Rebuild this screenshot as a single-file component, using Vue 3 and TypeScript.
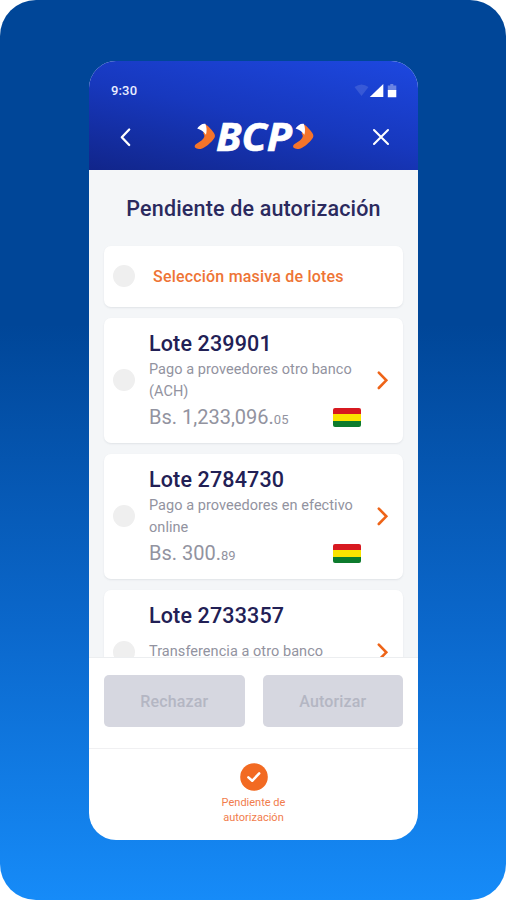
<script setup lang="ts">
interface Lote {
  id: string
  lines: string[]
  amount?: string
  cents?: string
}

const lotes: Lote[] = [
  { id: '239901', lines: ['Pago a proveedores otro banco', '(ACH)'], amount: '1,233,096', cents: '05' },
  { id: '2784730', lines: ['Pago a proveedores en efectivo', 'online'], amount: '300', cents: '89' },
  { id: '2733357', lines: ['Transferencia a otro banco'] },
]
</script>

<template>
  <main class="backdrop">
    <section class="phone">
      <header class="header">
        <div class="status">
          <span class="time">9:30</span>
          <svg class="signals" width="44" height="16" viewBox="0 0 44 16">
            <path d="M0.5 5 Q7.5 0 14.5 5 L7.5 14Z" fill="#fff" fill-opacity=".13" />
            <path d="M29.3 2 V15 H15.8Z" fill="#fff" />
            <path d="M36.3 2 h3 v1.5 h3 v5 h-8.5 v-5 h2.5Z" fill="#fff" fill-opacity=".35" />
            <path d="M33.8 8 h8.5 v7.2 h-8.5Z" fill="#fff" />
          </svg>
        </div>
        <nav class="nav">
          <svg class="nav-icon" width="20" height="24" viewBox="0 0 20 24">
            <path d="M14.2 4.5 L6.8 12.2 L14.2 20" fill="none" stroke="#fff" stroke-width="2.3" stroke-linecap="round" stroke-linejoin="round" />
          </svg>
          <svg class="logo" width="122" height="36" viewBox="0 0 122 36">
            <g id="mark">
              <path d="M11.3 5 C14.5 7.2 18.8 11.8 20.6 15.2 C21.3 16.8 21 18.2 19.8 19.8 C17 23.6 12.2 28 8.2 29.4 C5.4 30.4 2.4 30.1 1 28.6 C.2 27.2 1 25.8 2.6 24.8 C6.4 22.4 9.4 20.6 10.2 18 C10.7 16.6 10 15.6 9.3 14.5Z" fill="#f5742a" />
              <path d="M3.2 9.6 C5 6.4 8.2 4.2 11.3 4.7 C12.8 7.8 13 12 12 15.8 C9.5 12.6 6.8 10.6 3.2 9.6Z" fill="#fff" />
            </g>
            <use href="#mark" x="98.4" />
            <text class="wordmark" x="22" y="31.5" textLength="76" lengthAdjust="spacingAndGlyphs">BCP</text>
          </svg>
          <svg class="nav-icon" width="24" height="24" viewBox="0 0 24 24">
            <path d="M5 5 L19 19 M19 5 L5 19" fill="none" stroke="#fff" stroke-width="2.1" stroke-linecap="round" />
          </svg>
        </nav>
      </header>

      <div class="content">
        <h1 class="title">Pendiente de autorización</h1>
        <div class="card bulk">
          <span class="check" />
          <span class="bulk-label">Selección masiva de lotes</span>
        </div>
        <article v-for="lote in lotes" :key="lote.id" class="card lote" :class="{ short: !lote.amount }">
          <span class="check" />
          <div class="body">
            <h2 class="name">Lote {{ lote.id }}</h2>
            <p class="desc"><span v-for="line in lote.lines" :key="line" class="line">{{ line }}</span></p>
            <div v-if="lote.amount" class="money">
              <span class="amount">Bs. {{ lote.amount }}.<small class="cents">{{ lote.cents }}</small></span>
              <span class="flag" />
            </div>
          </div>
          <svg class="arrow" width="14" height="22" viewBox="0 0 14 22">
            <path d="M2.8 2.6 L10.3 10.3 L2.8 18" fill="none" stroke="#ee6418" stroke-width="2.6" stroke-linecap="round" stroke-linejoin="miter" />
          </svg>
        </article>
      </div>

      <div class="actions">
        <button class="action reject">Rechazar</button>
        <button class="action approve">Autorizar</button>
      </div>

      <footer class="tab">
        <svg width="28" height="28" viewBox="0 0 28 28">
          <circle cx="14" cy="14" r="13.8" fill="#f26a22" />
          <path d="M8.4 14.4 L12.2 17.8 L19.2 10.4" fill="none" stroke="#fff" stroke-width="2.5" stroke-linecap="round" stroke-linejoin="round" />
        </svg>
        <span class="tab-label">Pendiente de<br />autorización</span>
      </footer>
    </section>
  </main>
</template>

<style>
body {
  margin: 0;
  background: #fff;
}
</style>

<style scoped>
.backdrop {
  box-sizing: border-box;
  width: 506px;
  height: 900px;
  padding: 61px 88px 60px 89px;
  border-radius: 36px;
  background: linear-gradient(180deg, #004698 0%, #004698 36%, #0b68cc 70%, #168bf8 100%);
  font-family: Roboto, "Liberation Sans", sans-serif;
}
.phone {
  display: flex;
  flex-direction: column;
  height: 779px;
  border-radius: 27px;
  overflow: hidden;
  background: #fff;
}
.header {
  flex: none;
  height: 109px;
  background: linear-gradient(192deg, #1d48e0 0%, #1738be 50%, #11258a 100%);
}
.status {
  display: flex;
  align-items: center;
  justify-content: space-between;
  height: 18px;
  padding: 20px 20px 1px 22px;
}
.time {
  color: #e9edff;
  font-size: 13px;
  font-weight: 500;
  letter-spacing: 0.15px;
}
.nav {
  display: flex;
  align-items: center;
  justify-content: space-between;
  height: 36px;
  padding: 19px 25px 0 26px;
}
.logo {
  margin-left: 6px;
  overflow: visible;
}
.wordmark {
  fill: #fff;
  stroke: #fff;
  stroke-width: 0.7px;
  font: italic 700 39px "Open Sans", "Noto Sans", sans-serif;
}
.content {
  flex: none;
  height: 487px;
  box-sizing: border-box;
  overflow: hidden;
  padding: 25px 15px 0;
  background: #f4f6f8;
}
.title {
  margin: 0 0 24px;
  color: #2b2a5e;
  font-size: 21.5px;
  font-weight: 500;
  line-height: 27px;
  letter-spacing: 0.17px;
  text-align: center;
  white-space: nowrap;
}
.card {
  display: flex;
  box-sizing: border-box;
  align-items: center;
  margin-bottom: 11px;
  border-radius: 7px;
  background: #fff;
  box-shadow: 0 1px 2px rgba(60, 70, 90, 0.1);
}
.check {
  flex: none;
  width: 22px;
  height: 22px;
  margin: 0 0 1px 9px;
  border-radius: 50%;
  background: #efefef;
}
.bulk {
  height: 61px;
}
.bulk-label {
  margin: 0 0 1px 18px;
  color: #ee7435;
  font-size: 16px;
  font-weight: 500;
  letter-spacing: 0.2px;
}
.lote {
  height: 125px;
}
.body {
  align-self: flex-start;
  width: 212px;
  margin-left: 14px;
  padding-top: 12px;
}
.name {
  margin: 0;
  color: #222055;
  font-size: 21.5px;
  font-weight: 500;
  line-height: 27px;
  letter-spacing: 0.15px;
  white-space: nowrap;
}
.desc {
  margin: 0;
  padding-top: 2px;
  color: #9293a0;
  font-size: 14.5px;
  line-height: 21.5px;
  letter-spacing: 0.05px;
  white-space: nowrap;
}
.line {
  display: block;
}
.short .desc {
  padding-top: 12px;
}
.money {
  display: flex;
  align-items: center;
  justify-content: space-between;
  height: 30px;
}
.amount {
  color: #9293a0;
  font-size: 20px;
}
.cents {
  font-size: 13px;
}
.flag {
  width: 28px;
  height: 19px;
  border-radius: 2px;
  background: linear-gradient(#d71920 0 33.3%, #fbe300 33.3% 66.6%, #0d7b2d 66.6%);
}
.arrow {
  margin-left: 15px;
}
.actions {
  display: flex;
  flex: none;
  box-sizing: border-box;
  height: 92px;
  gap: 18px;
  padding: 17px 15px 0;
  border-top: 1px solid #eceef0;
  border-bottom: 1px solid #f0f0f2;
}
.action {
  width: 141px;
  height: 52px;
  padding: 0;
  border: 0;
  border-radius: 5px;
  background: #d6d7e0;
  color: #b4b6c3;
  font: 500 16px Roboto, sans-serif;
  letter-spacing: 0.15px;
}
.tab {
  display: flex;
  flex: 1;
  flex-direction: column;
  align-items: center;
  padding-top: 14px;
}
.tab-label {
  margin-top: 4px;
  color: #f17c4c;
  font-size: 11px;
  line-height: 15px;
  text-align: center;
}
</style>
